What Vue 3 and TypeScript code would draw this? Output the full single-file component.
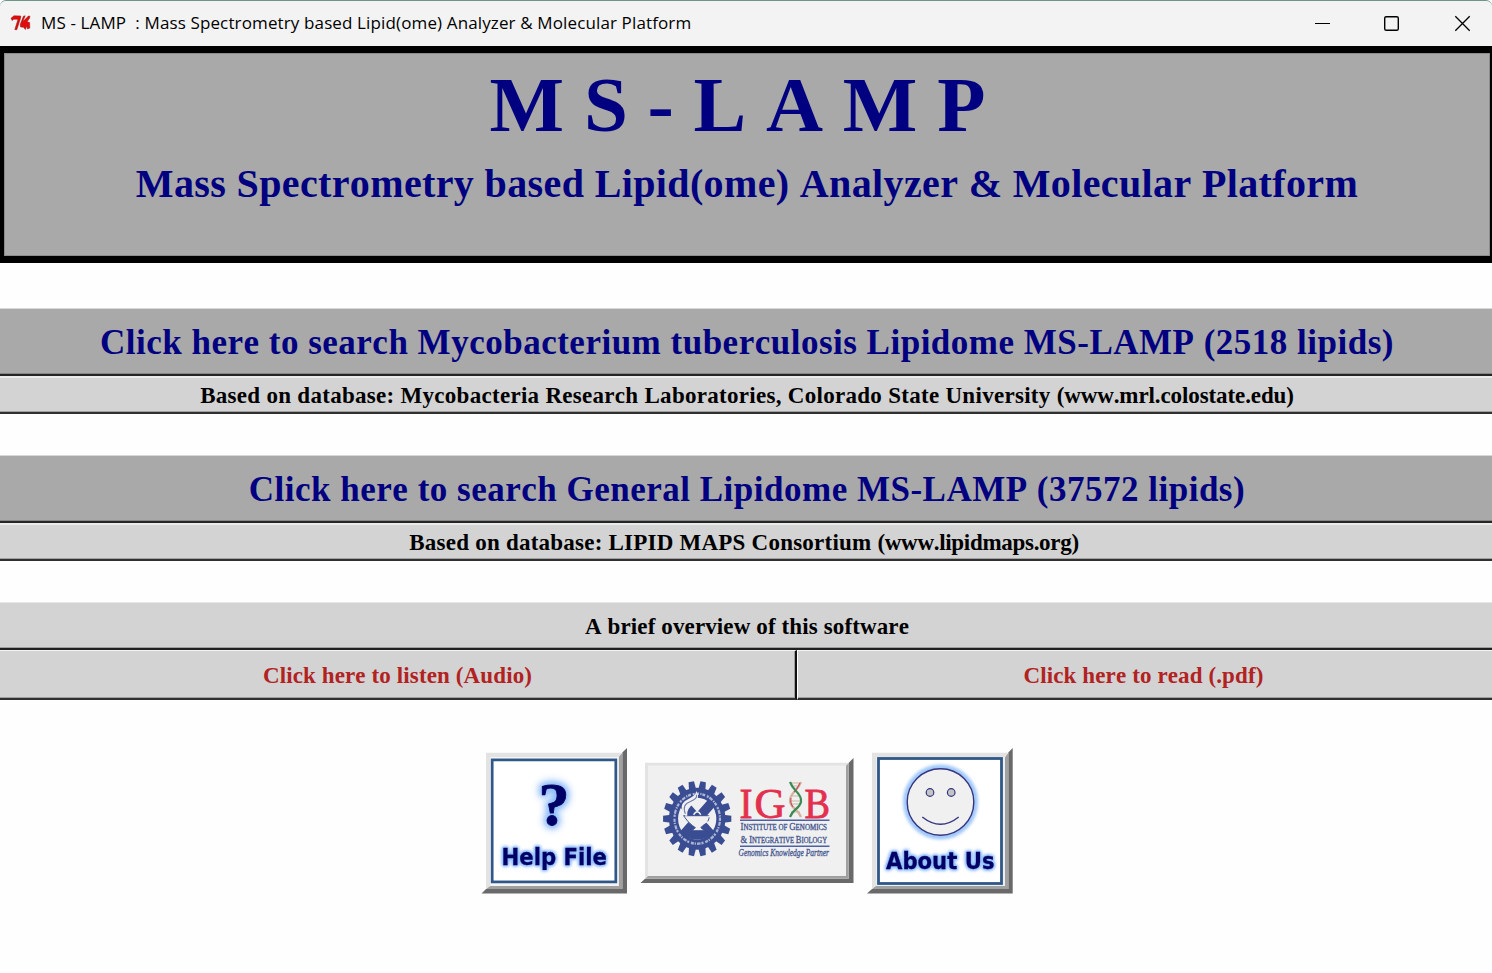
<script setup lang="ts">
interface Database {
  id: string
  title: string
  source: string
  url: string
}

const databases: Database[] = [
  {
    id: 'tb',
    title: 'Click here to search Mycobacterium tuberculosis Lipidome MS-LAMP (2518 lipids)',
    source: 'Based on database: Mycobacteria Research Laboratories, Colorado State University ',
    url: '(www.mrl.colostate.edu)',
  },
  {
    id: 'general',
    title: 'Click here to search General Lipidome MS-LAMP (37572 lipids)',
    source: 'Based on database: LIPID MAPS Consortium ',
    url: '(www.lipidmaps.org)',
  },
]

const teeth: number[] = Array.from({ length: 18 }, (_, i) => i * 20 + 10)
</script>

<template>
  <div class="window">
    <header class="titlebar">
      <svg class="app-icon" width="24" height="20" viewBox="8 12 24 20">
        <path d="M11 17.2 L14 14.8 L20.8 15 L20.6 17 L16.8 28.8 L14.8 28.6 L18 18.3 L13.6 18.2 L12.2 19.6 Z" fill="#e60b0b" stroke="#8d1414" stroke-width=".5" />
        <path d="M23.4 15.2 L25.2 14.8 L22.9 20.6 L28.4 15 L30 15.2 L29.4 17.6 L27 20.8 L29.6 21.4 L29.8 27 L27.6 28 L26.8 25 L25.4 28.6 L23.6 26.2 L20.6 26 L20.2 23.6 Z" fill="#e60b0b" stroke="#8d1414" stroke-width=".5" />
      </svg>
      <span class="caption">MS - LAMP&nbsp; : Mass Spectrometry based Lipid(ome) Analyzer &amp; Molecular Platform</span>
      <svg class="controls" width="180" height="40" viewBox="1312 2 180 40" fill="none" stroke="#000" stroke-width="1.3">
        <path d="M1315 22.5H1330" stroke-width="1" />
        <rect x="1384.7" y="15.7" width="13.6" height="13.6" rx="1.6" stroke-width="1.4" />
        <path d="M1455.3 15.3L1469.7 29.7M1469.7 15.3L1455.3 29.7" />
      </svg>
    </header>

    <section class="banner">
      <h1>M S - L A M P</h1>
      <h2>Mass Spectrometry based Lipid(ome) Analyzer &amp; Molecular Platform</h2>
    </section>

    <section v-for="db in databases" :key="db.id" class="database" :class="db.id">
      <div class="bar search"><span>{{ db.title }}</span></div>
      <div class="bar source"><span>{{ db.source }}<span class="url">{{ db.url }}</span></span></div>
    </section>

    <section class="overview">
      <div class="bar heading"><span>A brief overview of this software</span></div>
      <div class="split">
        <div class="bar listen"><span>Click here to listen (Audio)</span></div>
        <div class="bar read"><span>Click here to read (.pdf)</span></div>
      </div>
    </section>

    <footer class="buttons">
      <svg class="help" width="147" height="147" viewBox="481 748 147 147">
        <defs>
          <filter id="glow" x="-30%" y="-30%" width="160%" height="160%"><feGaussianBlur stdDeviation="1.8" /></filter>
        </defs>
        <path d="M627 748V893.5H481.5L486 889H622.3V752.5Z" fill="#696969" />
        <path d="M622.5 752.5V889H486L490.5 885.5H618.5V757Z" fill="#a0a0a0" />
        <path d="M486 889V752.7H622.5L618.7 757V886H490.3Z" fill="#e3e3e3" />
        <rect x="490.3" y="757" width="128.4" height="129" fill="#f4f4f4" />
        <rect x="492.2" y="759.9" width="123.6" height="122" fill="#fff" stroke="#2f5788" stroke-width="2.7" />
        <g class="serif glow-text" font-size="62" text-anchor="middle">
          <text class="wide" x="554" y="825" fill="#000066">?</text>
        </g>
        <text class="sans glow-label" font-size="23" x="501.5" y="864.7" textLength="105.5" lengthAdjust="spacingAndGlyphs">Help File</text>
      </svg>

      <svg class="institute" width="215" height="127" viewBox="640 758 215 127">
        <path d="M853.5 758V883H640.5L645 878.7H848.8V762.7Z" fill="#696969" />
        <path d="M848.8 762.7V878.7H645L648 875.5H846V765.5Z" fill="#a0a0a0" />
        <path d="M645 878.7V762.7H848.8L846 765.7V876H648Z" fill="#e3e3e3" />
        <rect x="648" y="765.5" width="198" height="110.3" fill="#f0f0f0" />
        <g transform="translate(697.2 818.7) scale(.91 1)">
          <path v-for="a in teeth" :key="a" d="M-4 -29L-3 -37.5H3L4 -29Z" :transform="`rotate(${a})`" fill="#3a4d92" />
          <circle r="31" fill="#3a4d92" />
          <circle r="25" fill="none" stroke="#aab4d6" stroke-width="2.4" stroke-dasharray="2.2 1 4 1.3 1.4 .9 3.2 2" />
          <circle r="21" fill="#f0f0f0" />
          <path d="M-16 -16L15 16M-15 16L16 -16" stroke="#3a4d92" stroke-width="10" />
          <path d="M-14 17Q-8 7 0 7T14 17Q0 25 -14 17Z" fill="#3a4d92" />
          <path d="M-15 -3H13Q14 3 6 7L4 9L8 12H-6L-2 9L-5 7Q-10 4 -15 -3Z" fill="#f0f0f0" stroke="#3a4d92" stroke-width="1" />
          <path d="M-4 -4Q0 -10 4 -4M12 -2Q17 -4 16 1T10 3" fill="none" stroke="#f0f0f0" stroke-width="1.6" />
          <path d="M-13 -3Q-22 -14 -11 -19T-1 -28Q4 -20 -4 -15T-11 -3Z" fill="#f0f0f0" />
          <path d="M-13 -5Q-17 -14 -8 -17T-1 -24" fill="none" stroke="#6e7db0" stroke-width="1.2" />
        </g>
        <g class="serif-regular" font-size="42" fill="#e4304f" stroke="#e4304f" stroke-width=".8">
          <text x="739.5" y="817.7" textLength="13" lengthAdjust="spacingAndGlyphs">I</text>
          <text x="754.5" y="817.7" textLength="31" lengthAdjust="spacingAndGlyphs">G</text>
          <text x="804.5" y="817.7" textLength="25.5" lengthAdjust="spacingAndGlyphs">B</text>
        </g>
        <path d="M791 783H800M792 786H799M791 796H800M790 801H801M791 804H799M791 812H800" stroke="#c8b99a" stroke-width="1.2" />
        <g fill="none" stroke-width="2.2">
          <path d="M801 782Q799 787 795 791Q789 797 790 802Q791 806 795 809Q799 812 801 817" stroke="#d3b3a0" />
          <path d="M800 783Q798 788 794 792M791 798Q790 803 793 807" stroke="#cc4c5c" stroke-width="1.1" />
          <path d="M790 782Q792 787 796 791Q802 797 801 802Q800 806 796 809Q792 812 790 817" stroke="#3d8a55" />
        </g>
        <path d="M740 820.3H829.5M740 846.3H829.5" stroke="#4a61a6" stroke-width="1.4" />
        <g class="serif-regular" fill="#43558f" stroke="#43558f" stroke-width=".3">
          <text x="740.5" y="830.3" font-size="7.4" textLength="86.5" lengthAdjust="spacingAndGlyphs"><tspan font-size="9.4">I</tspan>NSTITUTE OF <tspan font-size="9.4">G</tspan>ENOMICS</text>
          <text x="740.5" y="843" font-size="7.4" textLength="86.5" lengthAdjust="spacingAndGlyphs"><tspan font-size="9.4">&amp; I</tspan>NTEGRATIVE <tspan font-size="9.4">B</tspan>IOLOGY</text>
          <text x="738.5" y="855.5" font-size="10" font-style="italic" textLength="90.5" lengthAdjust="spacingAndGlyphs">Genomics Knowledge Partner</text>
        </g>
      </svg>

      <svg class="about" width="147" height="147" viewBox="866 748 147 147">
        <path d="M1012.7 748V893.5H867L872 889H1008.3V752.5Z" fill="#696969" />
        <path d="M1008.5 752.5V889H872L876 885.5H1005V757Z" fill="#a0a0a0" />
        <path d="M872 889V752.7H1008.5L1005 757V886H876Z" fill="#e3e3e3" />
        <rect x="876" y="757" width="129" height="129" fill="#eee" />
        <rect x="878.5" y="758.5" width="123" height="125" fill="#fff" stroke="#2f5788" stroke-width="2.8" />
        <circle cx="940.5" cy="802" r="34.5" fill="none" stroke="#9fc7fa" stroke-width="6" filter="url(#glow)" />
        <circle cx="940.5" cy="802" r="33.3" fill="#f0f0f0" stroke="#34347f" stroke-width="1.4" />
        <g fill="#c4c4c4" stroke="#34347f" stroke-width="1.2">
          <circle cx="930" cy="792.5" r="3.8" />
          <circle cx="951.2" cy="792.5" r="3.8" />
        </g>
        <path d="M922.3 817Q940.5 831.5 958.7 817" fill="none" stroke="#34347f" stroke-width="1.4" />
        <text class="sans glow-label" font-size="23" x="886" y="869" textLength="108.5" lengthAdjust="spacingAndGlyphs">About Us</text>
      </svg>
    </footer>
  </div>
</template>

<style>
body {
  margin: 0;
  overflow: hidden;
}
</style>

<style scoped>
.window {
  box-sizing: border-box;
  width: 1492px;
  height: 973px;
  overflow: hidden;
  background: #fefefe;
  font-family: "Liberation Serif", "Times New Roman", serif;
  font-weight: bold;
  font-kerning: none;
}
.titlebar {
  box-sizing: border-box;
  display: flex;
  align-items: center;
  height: 46px;
  padding: 0 0 2px 8px;
  background: #f3f3f3;
  border-top: 1px solid #6f9587;
  border-radius: 6px 6px 0 0;
}
.app-icon {
  margin-right: 9px;
}
.caption {
  font: 400 17px/24px "Open Sans", sans-serif;
  letter-spacing: 0.13px;
  white-space: nowrap;
  color: #000;
}
.controls {
  margin-left: auto;
}
.banner {
  box-sizing: border-box;
  height: 217px;
  border: solid #000;
  border-width: 7px 2px 7px 4px;
  background: #a9a9a9;
  color: #000080;
  text-align: center;
  white-space: nowrap;
  box-shadow: inset 0 0 0 1px #8c8c8c;
}
h1,
h2 {
  margin: 0;
  font-weight: bold;
}
h1 {
  padding: 12px 19px 0 0;
  font-size: 79px;
  line-height: 80px;
}
h2 {
  padding-top: 15px;
  font-size: 40px;
  line-height: 48px;
  letter-spacing: 0.37px;
}
.bar {
  box-sizing: border-box;
  display: flex;
  align-items: center;
  justify-content: center;
  padding: 2px 0 0 2px;
  white-space: pre;
}
.database {
  margin-top: 45px;
}
.database.general {
  margin-top: 41px;
}
.search {
  height: 68px;
  background: #a9a9a9;
  border-top: 1px solid #d8d8d8;
  border-bottom: 2px solid #252525;
  box-shadow: inset 0 -1px #858585;
  color: #000080;
  font-size: 35px;
  letter-spacing: 0.5px;
}
.source {
  height: 38px;
  background: #d3d3d3;
  border-top: 2px solid #eaeaea;
  border-bottom: 2px solid #303030;
  box-shadow: inset 0 -1px #a0a0a0;
  color: #000;
  font-size: 23px;
  letter-spacing: 0.29px;
}
.source .url {
  letter-spacing: -0.1px;
}
.general .source {
  letter-spacing: 0.23px;
  padding-right: 6px;
}
.general .source .url {
  letter-spacing: -0.3px;
}
.overview {
  margin-top: 41px;
  font-size: 23px;
  letter-spacing: 0.12px;
}
.heading {
  height: 48px;
  background: #d3d3d3;
  border-top: 1px solid #e6e6e6;
  border-bottom: 2px solid #202020;
  box-shadow: inset 0 -1px #a0a0a0;
  color: #000;
}
.split {
  display: grid;
  grid-template-columns: 797px 1fr;
}
.listen,
.read {
  height: 50px;
  padding: 2px 0 0;
  background: #d3d3d3;
  border-top: 1px solid #f4f4f4;
  border-bottom: 2px solid #303030;
  box-shadow: inset 0 -1px #a0a0a0;
  color: #b22222;
}
.listen {
  border-right: 2px solid #101010;
  box-shadow: inset -1px -1px #a0a0a0;
}
.read {
  padding-right: 3px;
  border-left: 1px solid #fff;
}
.buttons {
  display: flex;
  align-items: flex-start;
  padding: 48px 0 0 481px;
}
.institute {
  margin: 10px 11px 0 12px;
}
.serif {
  font-family: "Liberation Serif", serif;
  font-weight: bold;
}
.serif-regular {
  font-family: "Liberation Serif", serif;
  font-weight: normal;
}
.sans {
  font-family: "DejaVu Sans", sans-serif;
  font-weight: bold;
}
.wide {
  stroke: #000066;
  stroke-width: 0.8px;
}
.glow-text {
  filter: drop-shadow(0 0 3px #8fbdfa) drop-shadow(0 0 3px #8fbdfa) drop-shadow(0 0 3px #a8cbfa);
}
.glow-label {
  fill: #000066;
  stroke: #000066;
  stroke-width: 0.3px;
  filter: drop-shadow(0 0 1.6px #8fbdfa) drop-shadow(0 0 1.6px #8fbdfa) drop-shadow(0 0 1px #8fbdfa);
}
</style>
